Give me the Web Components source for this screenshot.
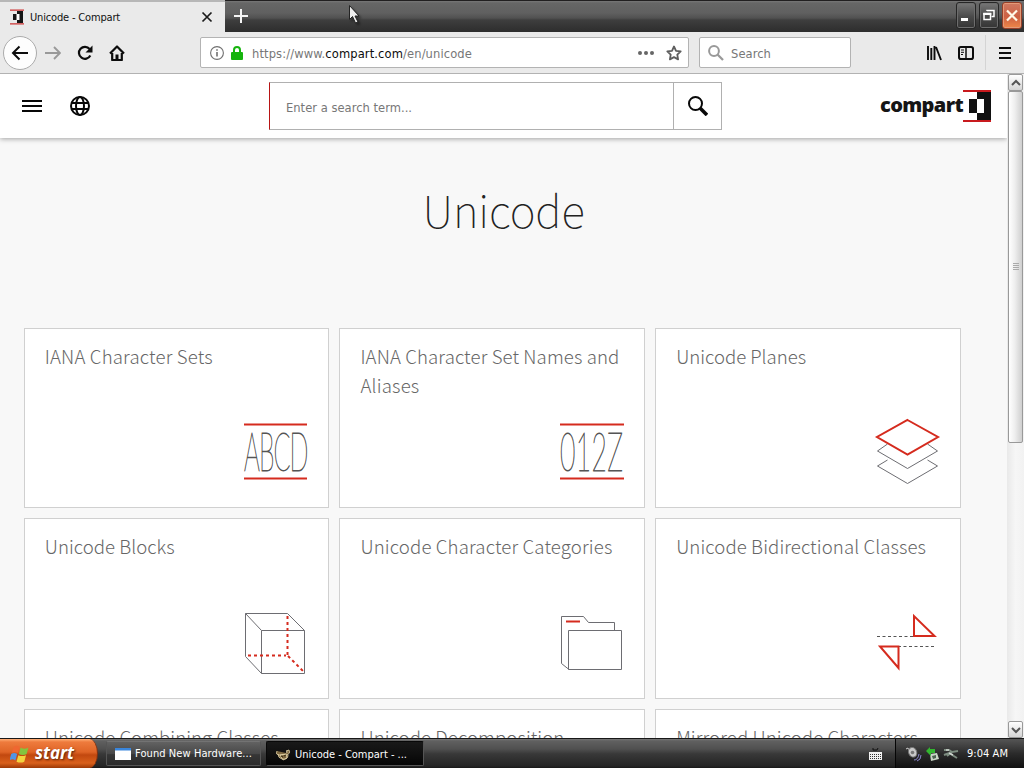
<!DOCTYPE html>
<html lang="en">
<head>
<meta charset="utf-8">
<title>Unicode - Compart</title>
<style>
  body {
    margin: 0;
    width: 1024px;
    height: 768px;
    overflow: hidden;
    font-family: "DejaVu Sans Condensed", "DejaVu Sans", sans-serif;
  }
</style>
</head>
<body>
<desktop-screen>
  <tab-strip slot="window" label="Unicode - Compart"></tab-strip>
  <nav-toolbar slot="window"></nav-toolbar>
  <page-view slot="window">
    <page-header slot="header"></page-header>
    <page-title><fit-text width="162">Unicode</fit-text></page-title>
    <card-grid>
      <category-card icon="abcd"><fit-text width="168">IANA Character Sets</fit-text></category-card>
      <category-card icon="digits"><fit-text width="259">IANA Character Set Names and</fit-text> <fit-text width="59">Aliases</fit-text></category-card>
      <category-card icon="planes"><fit-text width="130">Unicode Planes</fit-text></category-card>
      <category-card icon="cube"><fit-text width="130">Unicode Blocks</fit-text></category-card>
      <category-card icon="folder"><fit-text width="252">Unicode Character Categories</fit-text></category-card>
      <category-card icon="bidi"><fit-text width="250">Unicode Bidirectional Classes</fit-text></category-card>
      <category-card><fit-text width="234">Unicode Combining Classes</fit-text></category-card>
      <category-card><fit-text width="204">Unicode Decomposition</fit-text></category-card>
      <category-card><fit-text width="242">Mirrored Unicode Characters</fit-text></category-card>
    </card-grid>
  </page-view>
  <task-bar slot="taskbar">
    <task-button icon="window" width="155"><fit-text width="117">Found New Hardware...</fit-text></task-button>
    <task-button icon="gnu" width="158" active><fit-text width="112">Unicode - Compart - ...</fit-text></task-button>
  </task-bar>
  <mouse-pointer slot="pointer"></mouse-pointer>
</desktop-screen>

<script>
// Small helper so every element only has to supply its markup.
class ShadowElement extends HTMLElement {
    constructor() {
        super();
        this.attachShadow({mode: 'open'});
    }

    connectedCallback() {
        this.shadowRoot.innerHTML = this.render();
    }
}

// Tracks its text in or out until it fills the given width.
class FitText extends ShadowElement {
    render() {
        return `
          <style>
            :host { display: inline-block; white-space: nowrap; }
          </style>
          <slot></slot>`;
    }

    connectedCallback() {
        super.connectedCallback();
        const width = Number(this.getAttribute('width'));
        const count = this.textContent.length;
        this.style.letterSpacing = '0';
        const natural = this.getBoundingClientRect().width;
        this.style.letterSpacing = `${(width - natural) / count}px`;
    }
}

class DesktopScreen extends ShadowElement {
    render() {
        return `
          <style>
            :host { display: flex; flex-direction: column; width: 1024px; height: 768px; position: relative; overflow: hidden; }
            .window { flex: 1; min-height: 0; display: flex; flex-direction: column; }
          </style>
          <div class="window"><slot name="window"></slot></div>
          <slot name="taskbar"></slot>
          <slot name="pointer"></slot>`;
    }
}

class TabStrip extends ShadowElement {
    render() {
        return `
          <style>
            :host {
              display: flex; height: 32px; flex: none; box-sizing: border-box;
              border-top: 1px solid #211f20;
              background: linear-gradient(#777 0, #666 2px, #606060 12px, #515151 17px, #3e3e3e 19px, #2d2d2d 31px);
              font-size: 11px; color: #111;
            }
            .tab {
              display: flex; align-items: center; width: 225px; box-sizing: border-box; margin-top: -1px;
              border-top: 2px solid #b7b7b7; background: #eaeaea; padding: 0 12px 0 10px;
            }
            .favicon { margin-right: 6px; }
            .close { margin-left: auto; }
            .plus { margin: 7px 0 0 8px; }
            .buttons { display: flex; gap: 3px; margin: 1px 2px 0 auto; }
            .buttons span {
              width: 20px; height: 27px; box-sizing: border-box; border: 1px solid #262626; border-radius: 3px;
              background: linear-gradient(#777, #4a4a4a 55%, #343434); box-shadow: inset 0 0 0 1px #6d6d6d;
            }
            .buttons span.quit { border-color: #963f28; background: linear-gradient(#cf7a62, #cc6043 55%, #ef8748); box-shadow: inset 0 0 0 1px #e49a78; }
            svg { display: block; }
          </style>
          <div class="tab">
            <svg class="favicon" width="14" height="16" viewBox="0 0 14 16">
              <path d="M0 1.200h14M0 14.800h14" stroke="#c33" stroke-width="1.200"/>
              <path d="M7 2h6v12H7z" fill="#151515"/><path d="M3 5h4v6H3z" fill="#151515"/><path d="M6.500 5h3v6h-3z" fill="#fff"/>
            </svg>
            <fit-text width="90">${this.getAttribute('label')}</fit-text>
            <svg class="close" width="12" height="12" viewBox="0 0 12 12"><path d="M1.500 1.500l9 9M10.500 1.500l-9 9" stroke="#1b1b1b" stroke-width="1.700"/></svg>
          </div>
          <svg class="plus" width="16" height="16" viewBox="0 0 16 16"><path d="M8 1v14M1 8h14" stroke="#f5f5f5" stroke-width="2"/></svg>
          <div class="buttons">
            <span><svg width="18" height="25"><path d="M4 16.500h7" stroke="#fff" stroke-width="3"/></svg></span>
            <span><svg width="18" height="25"><path d="M7 8V7.500h7v6h-2.500" fill="none" stroke="#fff" stroke-width="1.500"/><path d="M4 10.500h6.500v6H4z" fill="none" stroke="#fff" stroke-width="1.500"/><path d="M3.300 11h8" stroke="#fff" stroke-width="2"/></svg></span>
            <span class="quit"><svg width="18" height="25"><path d="M4 7.500l10 10M14 7.500l-10 10" stroke="#fff8e8" stroke-width="2.200"/></svg></span>
          </div>`;
    }
}

class NavToolbar extends ShadowElement {
    render() {
        return `
          <style>
            :host {
              display: flex; align-items: center; height: 42px; flex: none; box-sizing: border-box;
              border-bottom: 1px solid #b2b2b2; background: #eaeaea; padding: 0 13px 0 3px; font-size: 12.800px; color: #777;
            }
            svg { display: block; flex: none; }
            fit-text { padding-top: 1px; }
            .back {
              width: 34px; height: 34px; box-sizing: border-box; border: 1px solid #ababab; border-radius: 50%;
              background: #fdfdfd; display: grid; place-items: center;
            }
            .buttons { display: flex; gap: 16px; margin-left: 8px; }
            .field {
              display: flex; align-items: center; height: 31px; box-sizing: border-box;
              border: 1px solid #b3b3b3; border-radius: 2px; background: #fff;
            }
            .url { width: 489px; margin-left: 75px; padding: 0 6px 0 9px; }
            .url b { font-weight: normal; color: #0c0c0c; }
            .lock { margin: 0 9px 0 7px; }
            .dots { margin-left: auto; margin-right: 12px; }
            .search { width: 152px; margin-left: 10px; padding-left: 8px; gap: 7px; }
            .tools { display: flex; gap: 16px; margin-left: auto; }
            .divider { width: 1px; height: 35px; background: #d4d4d4; margin: 0 13px 0 11px; }
          </style>
          <div class="back"><svg width="18" height="18" viewBox="0 0 18 18"><path d="M17 9H2.500M8.500 2.500L2 9l6.500 6.500" fill="none" stroke="#0c0c0c" stroke-width="2"/></svg></div>
          <div class="buttons">
            <svg width="16" height="16" viewBox="0 0 16 16"><path d="M0 8h15M9 2l6 6-6 6" fill="none" stroke="#999" stroke-width="1.900"/></svg>
            <svg width="16" height="16" viewBox="0 0 16 16"><path d="M13.300 10.500A6 6 0 1 1 12.600 4" fill="none" stroke="#0c0c0c" stroke-width="2.200"/><path d="M15.500 0.500v7h-7z" fill="#0c0c0c"/></svg>
            <svg width="16" height="16" viewBox="0 0 16 16"><path d="M1 8.500L8 1.500l7 7M3.200 8v7h9.600V8" fill="none" stroke="#0c0c0c" stroke-width="2.200" stroke-linejoin="round"/><path d="M6.500 15V9.500h3V15z" fill="#0c0c0c"/></svg>
          </div>
          <div class="field url">
            <svg width="14" height="14" viewBox="0 0 14 14"><circle cx="7" cy="7" r="6.400" fill="none" stroke="#707070" stroke-width="1.100"/><path d="M7 6v4.500M7 3.200v1.600" stroke="#707070" stroke-width="1.600"/></svg>
            <svg class="lock" width="12" height="14" viewBox="0 0 12 14"><path d="M3 7V4a3 3 0 0 1 6 0v3" fill="none" stroke="#16b40e" stroke-width="2"/><rect y="6" width="12" height="8" rx="1" fill="#16b40e"/></svg>
            <fit-text width="220">https://www.<b>compart.com</b>/en/unicode</fit-text>
            <svg class="dots" width="16" height="4" viewBox="0 0 16 4" fill="#666"><circle cx="2" cy="2" r="2"/><circle cx="8" cy="2" r="2"/><circle cx="14" cy="2" r="2"/></svg>
            <svg width="16" height="16" viewBox="0 0 16 16"><path d="M8 1.500l2 4.300 4.700.6-3.400 3.300.8 4.700L8 12.100l-4.100 2.300.8-4.700L1.300 6.400 6 5.800z" fill="none" stroke="#5e5e5e" stroke-width="1.800" stroke-linejoin="round"/></svg>
          </div>
          <div class="field search">
            <svg width="16" height="16" viewBox="0 0 16 16"><circle cx="6" cy="6" r="4.900" fill="none" stroke="#999" stroke-width="2"/><path d="M9.500 9.500l5.500 5.500" stroke="#999" stroke-width="2.300"/></svg>
            <fit-text width="40">Search</fit-text>
          </div>
          <div class="tools">
            <svg width="16" height="16" viewBox="0 0 16 16"><path d="M2 1v14M5.300 3v12M8.500 1v14M10 2l5 13" stroke="#0c0c0c" stroke-width="1.900"/></svg>
            <svg width="16" height="16" viewBox="0 0 16 16"><rect x="1" y="2" width="14" height="12" rx="1.800" fill="none" stroke="#0c0c0c" stroke-width="2"/><path d="M8 2v12" stroke="#0c0c0c" stroke-width="1.500"/><path d="M3 5h3M3 7.300h3M3 9.500h2" stroke="#0c0c0c"/></svg>
          </div>
          <div class="divider"></div>
          <svg width="12" height="14" viewBox="0 0 12 14"><path d="M0 2h12M0 7h12M0 12h12" stroke="#0c0c0c" stroke-width="2"/></svg>`;
    }
}

class PageView extends ShadowElement {
    render() {
        return `
          <style>
            :host { display: flex; flex: 1; min-height: 0; background: #f8f8f8; }
            .page { flex: 1; display: flex; flex-direction: column; min-width: 0; overflow: hidden; }
          </style>
          <div class="page">
            <slot name="header"></slot>
            <slot></slot>
          </div>
          <scroll-bar></scroll-bar>`;
    }
}

class PageHeader extends ShadowElement {
    render() {
        return `
          <style>
            :host {
              display: flex; align-items: center; height: 64px; flex: none; box-sizing: border-box;
              padding: 0 16px 0 22px; background: #fff; box-shadow: 0 1px 5px rgba(0, 0, 0, .35);
            }
            svg { display: block; flex: none; }
            .globe { margin-left: 28px; }
            .search {
              display: flex; width: 453px; height: 48px; box-sizing: border-box; margin-left: 179px;
              border: 1px solid #b0b0b0; border-left: 1px solid #b81414;
            }
            .term { flex: 1; display: flex; align-items: center; padding: 2px 0 0 16px; font-size: 12.800px; color: #777; }
            .go { width: 47px; border-left: 1px solid #b0b0b0; display: grid; place-items: center; }
            .logo { display: flex; align-items: center; margin-left: auto; }
            .name { font: 800 20px/32px "Open Sans", sans-serif; color: #151515; margin-top: -3px; }
          </style>
          <svg width="20" height="14" viewBox="0 0 20 14"><path d="M0 2h20M0 7h20M0 12h20" stroke="#080808" stroke-width="2"/></svg>
          <svg class="globe" width="20" height="20" viewBox="0 0 20 20" fill="none" stroke="#080808" stroke-width="2">
            <circle cx="10" cy="10" r="9"/><ellipse cx="10" cy="10" rx="4" ry="9"/><path d="M1.500 7h17M1.500 13h17"/>
          </svg>
          <div class="search">
            <div class="term"><fit-text width="126">Enter a search term...</fit-text></div>
            <div class="go"><svg width="20" height="20" viewBox="0 0 20 20"><circle cx="7.500" cy="7.500" r="6.500" fill="none" stroke="#080808" stroke-width="2"/><path d="M12 12l7 7" stroke="#080808" stroke-width="3.600"/></svg></div>
          </div>
          <div class="logo">
            <fit-text class="name" width="83">compart</fit-text>
            <svg width="28" height="32" viewBox="0 0 28 32">
              <path d="M14 2h14v28H14z" fill="#111"/><path d="M6 9h8v14H6z" fill="#111"/><path d="M14 9h7v14h-7z" fill="#fff"/>
              <path d="M0 1h28M0 31h28" stroke="#c81a1e" stroke-width="2"/>
            </svg>
          </div>`;
    }
}

class PageTitle extends ShadowElement {
    render() {
        return `
          <style>
            :host {
              display: block; height: 189.600px; flex: none; text-align: center; color: #222; box-sizing: border-box; padding-top: 39px;
              font: 100 44px/64px "Noto Sans CJK SC", sans-serif;
            }
          </style>
          <slot></slot>`;
    }
}

class CardGrid extends ShadowElement {
    render() {
        return `
          <style>
            :host { display: grid; grid-template-columns: repeat(3, 1fr); grid-auto-rows: 180.500px; gap: 10px; width: 937px; margin-left: 23.800px; }
          </style>
          <slot></slot>`;
    }
}

const RED = '#d52b1e';
const INK = '#6d6d72';

const cardIcons = {
    abcd: `
      <path d="M0 5.500h63M0 59.500h63" stroke="${RED}" stroke-width="2"/>
      <text transform="translate(0 51.500) scale(.47 1)" textLength="137" lengthAdjust="spacing">ABCD</text>`,
    digits: `
      <path d="M0 5.500h64M0 59.500h64" stroke="${RED}" stroke-width="2"/>
      <text transform="translate(0 51.500) scale(.5 1)" textLength="126" lengthAdjust="spacing">012Z</text>`,
    planes: `
      <g fill="none" stroke="${INK}"><path d="M11.500 25L1.500 32l30 17.500L61.500 32l-10-7M11.500 41L1.500 47l30 17.500L61.500 47l-10-6"/></g>
      <path d="M31.500 1L62 18 31.500 35.500 1 18z" fill="#fff" stroke="${RED}" stroke-width="2"/>`,
    cube: `
      <g transform="translate(-1 0)">
        <g fill="none" stroke="${INK}"><path d="M2.500 3.500h42l17 17v43h-43l-16-17zM2.500 3.500l16 17h43M18.500 20.500v43"/></g>
        <path d="M44.500 6v39.500M5 45.500h38M45 46l16 16" fill="none" stroke="${RED}" stroke-width="2" stroke-dasharray="3 3"/>
      </g>`,
    folder: `
      <g fill="#fff" stroke="${INK}"><path d="M9 59.500L1.500 53.500V6.500h22l5 6h26V22"/><path d="M8.500 20.500h53v39h-53z"/></g>
      <path d="M6 11.500h14" stroke="${RED}" stroke-width="2"/>`,
    bidi: `
      <path d="M1 26.500h36M22 36.500h37" stroke="#555" stroke-dasharray="3 2.500"/>
      <path d="M38 6v20h20.500zM4 36.500h18.500V58z" fill="#fff" stroke="${RED}" stroke-width="2"/>`
};

class CategoryCard extends ShadowElement {
    render() {
        const icon = cardIcons[this.getAttribute('icon')] || '';
        return `
          <style>
            :host {
              display: flex; flex-direction: column; box-sizing: border-box; border: 1px solid #d0d0d0; background: #fff;
              padding: 12px 20px 21px; color: #666; font: 300 18.600px/29px "Noto Sans CJK SC", sans-serif;
            }
            svg { display: block; margin: auto 0 0 auto; overflow: visible; }
            text { font: 100 53px Lato, "Noto Sans CJK SC", sans-serif; fill: #555; stroke: #555; stroke-width: .9px; }
          </style>
          <div><slot></slot></div>
          <svg width="64" height="67" viewBox="0 0 64 67">${icon}</svg>`;
    }
}

class ScrollBar extends ShadowElement {
    render() {
        return `
          <style>
            :host { display: flex; flex-direction: column; width: 17px; flex: none; box-sizing: border-box; padding: 0 1px; background: linear-gradient(90deg, #e9e9e9, #f6f6f6 50%, #f2f2f2); }
            .arrow, .thumb { display: grid; place-items: center; box-sizing: border-box; border: 1px solid #999; border-radius: 2px; flex: none; }
            .arrow { height: 17px; background: linear-gradient(#fff, #d5d5d5); }
            .thumb { height: 352px; background: linear-gradient(90deg, #fff, #eee 45%, #cfcfcf); }
            .down { margin-top: auto; }
          </style>
          <div class="arrow"><svg width="10" height="8"><path d="M1 6l4-4 4 4" fill="none" stroke="#555" stroke-width="2"/></svg></div>
          <div class="thumb"><svg width="6" height="8"><path d="M0 .5h6M0 2.500h6M0 4.500h6M0 6.500h6" stroke="#aaa"/></svg></div>
          <div class="arrow down"><svg width="10" height="8"><path d="M1 2l4 4 4-4" fill="none" stroke="#555" stroke-width="2"/></svg></div>`;
    }
}

class TaskBar extends ShadowElement {
    render() {
        return `
          <style>
            :host {
              display: flex; height: 30px; flex: none; box-sizing: border-box; border-top: 1px solid #181818; color: #fff; font-size: 11px;
              background: linear-gradient(#777 0, #606060 2px, #505050 10px, #383838 15px, #252525 27px, #181818);
            }
            .start {
              display: flex; align-items: center; gap: 6px; width: 98px; box-sizing: border-box; padding-left: 10px;
              border-right: 1px solid #853211; border-radius: 0 9px 9px 0 / 0 15px 15px 0;
              background: linear-gradient(#ffae75 0, #ee7b3d 3px, #df6426 13px, #c2480f 16px, #d9601b 24px, #9c3907);
              font: italic bold 17px/26px "Open Sans", sans-serif; text-shadow: 1px 1px 2px #5b240b;
            }
            .start fit-text { margin-top: -2px; }
            .tasks { display: flex; gap: 5px; margin-left: 8px; align-items: center; }
            .keyboard { margin: 9px 13px 0 auto; }
            .tray {
              display: flex; align-items: center; width: 129px; box-sizing: border-box; border-left: 1px solid #050505;
              padding-left: 10px; background: linear-gradient(#555, #2b2b2b 50%, #101010);
            }
            .tray svg { margin-right: 3px; }
            .clock { margin-left: 5px; }
            svg { display: block; flex: none; }
          </style>
          <div class="start">
            <svg width="19" height="18" viewBox="1 2 16 14">
              <path d="M4 3q2.500-2 5 0L7.500 8q-2.500-1.500-5 0z" fill="#ef6731"/><path d="M10 3.500q3 2 6.500 0L15 9q-3 1.500-6.500 0z" fill="#83c43e"/>
              <path d="M2 9q2.500-1.500 5 0l-1.500 5.500q-2.500-2-5 0z" fill="#5295e5"/><path d="M8 10q3 1.500 6.500 0L13 15.500q-3 1.500-6.500 0z" fill="#f3d33e"/>
            </svg>
            <fit-text width="39">start</fit-text>
          </div>
          <div class="tasks"><slot></slot></div>
          <svg class="keyboard" width="13" height="13" viewBox="0 0 13 13">
            <path d="M4 0v2h4l1-2" fill="none" stroke="#111"/><path d="M0 4h13v8H0z" fill="#f1f1f1"/>
            <path d="M1 6.500h11M1 8.500h11M1 10.500h11" stroke="#333" stroke-dasharray="1 1"/>
          </svg>
          <div class="tray">
            <svg width="16" height="16" viewBox="0 0 16 16"><path d="M0 3l2-1 1 2" stroke="#ccc" fill="none"/><ellipse cx="6.500" cy="6.500" rx="4" ry="5" transform="rotate(-25 6 6)" fill="#c8c8c8" stroke="#777"/><circle cx="6.500" cy="6.500" r="1.800" fill="#777"/><path d="M8 14q4 0 5-6M11 15q4-1 4-6" fill="none" stroke="#8b87d0"/></svg>
            <svg width="15" height="16" viewBox="0 0 15 16"><path d="M5 8l7-1 2 6-8 2z" fill="#c8d5c5"/><path d="M7 10l4-1v3l-3 1z" fill="#4c6350"/><path d="M1 5l4-4v2h5v4H6v3z" fill="#32b62f"/></svg>
            <svg width="16" height="16" viewBox="0 0 16 16"><path d="M1 4l5 0 3 2 6-1M1 9l5-2 8 5M4 10l5-4" fill="none" stroke="#7d8d80" stroke-width="2"/><path d="M3 4h3M6 7l4 2" stroke="#d0d5d0" stroke-width="1.500"/></svg>
            <fit-text class="clock" width="41">9:04 AM</fit-text>
          </div>`;
    }
}

const taskIcons = {
    window: '<path d="M0 2h16v12H0z" fill="#fff"/><path d="M0 2h16v2.500H0z" fill="#3a86dc"/>',
    gnu: '<path d="M2 4q-2 4 3 4 4-1 6 0 5-1 3-5l-3 1q3 1 0 2M3 7q0 4 4 5 6 1 6-4M5 8l3 5 4-2-1-4z" fill="#7d6840" stroke="#e5d6aa" stroke-width=".8"/><path d="M6 9l2 1M9 9l2-1" stroke="#32270e"/>'
};

class TaskButton extends ShadowElement {
    render() {
        return `
          <style>
            :host {
              display: flex; align-items: center; gap: 4px; width: ${this.getAttribute('width')}px; height: 25px; box-sizing: border-box;
              border: 1px solid #555; border-top-color: #737373; border-radius: 2px; padding-left: 8px; color: #fff;
              background: linear-gradient(#626262, #484848 50%, #363636 55%, #2b2b2b);
            }
            :host([active]) { border-color: #080808 #555 #555 #080808; background: linear-gradient(#191919, #101010 50%, #050505); padding-top: 2px; }
            svg { flex: none; }
          </style>
          <svg width="16" height="16" viewBox="0 0 16 16">${taskIcons[this.getAttribute('icon')]}</svg>
          <slot></slot>`;
    }
}

// Floats over the title bar.
class MousePointer extends ShadowElement {
    render() {
        return `
          <style>
            :host { display: block; position: absolute; left: 349px; top: 5px; filter: drop-shadow(2px 2px 1px rgba(0, 0, 0, .4)); }
            svg { display: block; }
          </style>
          <svg width="12" height="20" viewBox="0 0 12 20"><path d="M.5.500v14l3-3 3 6.500 2.500-1-3-6H10z" fill="#eee" stroke="#222"/></svg>`;
    }
}

customElements.define('desktop-screen', DesktopScreen);
customElements.define('tab-strip', TabStrip);
customElements.define('nav-toolbar', NavToolbar);
customElements.define('page-view', PageView);
customElements.define('page-header', PageHeader);
customElements.define('page-title', PageTitle);
customElements.define('card-grid', CardGrid);
customElements.define('category-card', CategoryCard);
customElements.define('scroll-bar', ScrollBar);
customElements.define('task-bar', TaskBar);
customElements.define('task-button', TaskButton);
customElements.define('mouse-pointer', MousePointer);
// Last, so the surrounding fonts are in place before it measures.
customElements.define('fit-text', FitText);
</script>
</body>
</html>
